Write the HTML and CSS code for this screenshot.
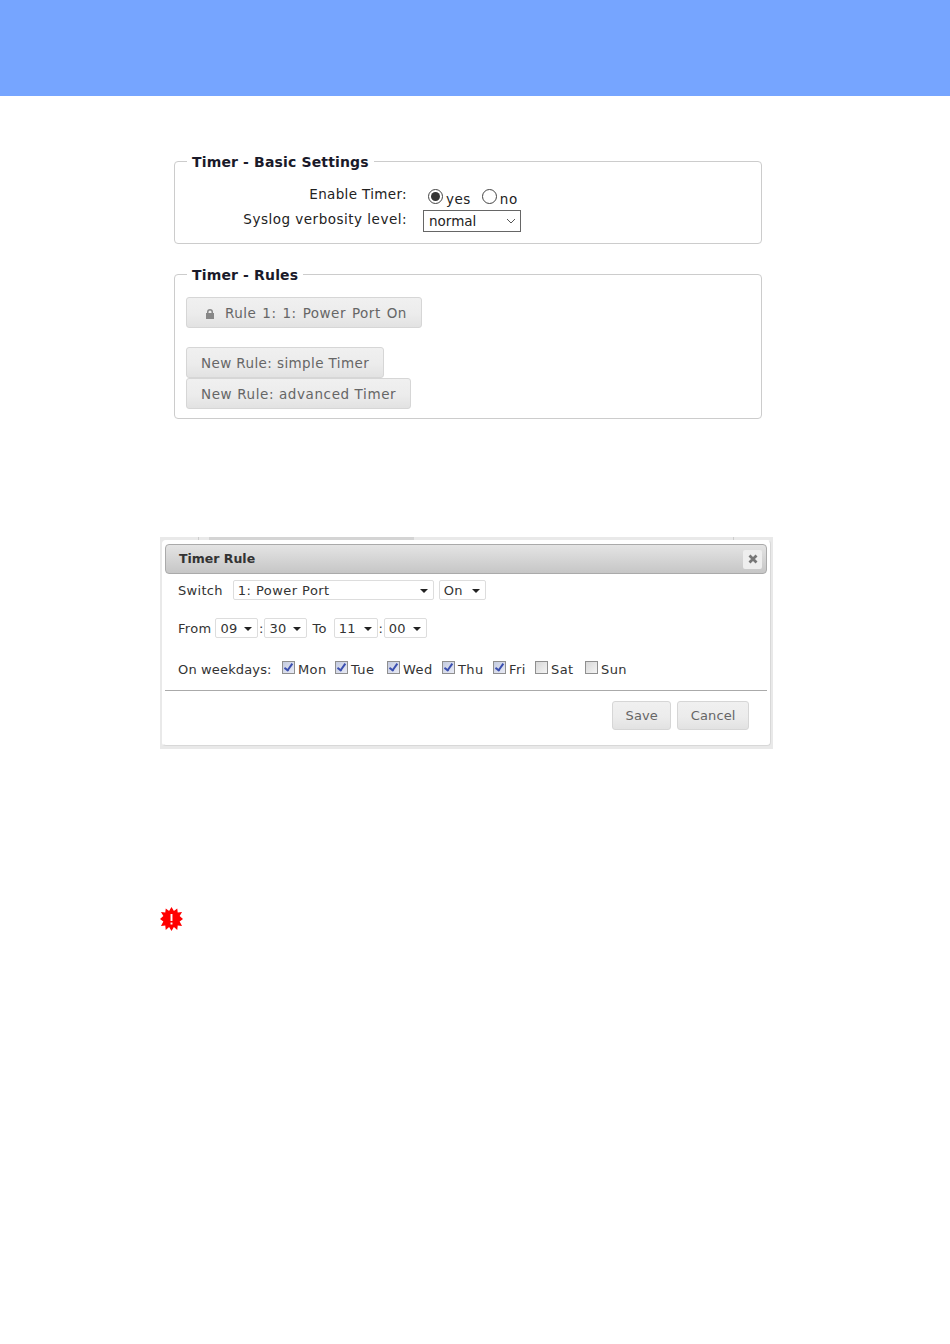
FILE: index.html
```html
<!DOCTYPE html>
<html lang="en">
<head>
    <meta charset="UTF-8">
    <title>Timer</title>
    <link rel="stylesheet" href="styles.css">
</head>
<body>
    <div class="top-band"></div>

    <main class="page">
        <!-- basic settings -->
        <fieldset class="group group-basic">
            <legend>Timer - Basic Settings</legend>
            <div class="form-grid">
                <label class="form-label form-label-short">Enable Timer:</label>
                <div class="radios">
                    <input type="radio" name="enable" class="radio" checked><span class="radio-text">yes</span>
                    <input type="radio" name="enable" class="radio radio-no"><span class="radio-text">no</span>
                </div>
                <label class="form-label form-label-low">Syslog verbosity level:</label>
                <div class="native-select"><span class="native-value">normal</span>
                    <svg class="chevron" width="10" height="6" viewBox="0 0 10 6"><path d="M1 1l4 4 4-4" fill="none" stroke="#555" stroke-width="1"/></svg>
                </div>
            </div>
        </fieldset>

        <!-- rules -->
        <fieldset class="group group-rules">
            <legend>Timer - Rules</legend>
            <button class="btn btn-rule">
                <svg class="lock" width="8" height="10" viewBox="0 0 8 10"><path d="M1 4V3a3 3 0 0 1 6 0v1h1v6H0V4zm1.500 0h3V3a1.500 1.500 0 0 0-3 0z" fill="#888"/></svg>
                Rule 1: 1: Power Port On
            </button>
            <div class="new-rules">
                <button class="btn btn-simple">New Rule: simple Timer</button>
                <button class="btn btn-advanced">New Rule: advanced Timer</button>
            </div>
        </fieldset>

        <!-- dialog shot -->
        <div class="dialog-frame">
            <div class="behind-strip">
                <span class="behind-a"></span><span class="behind-b"></span><span class="behind-c"></span>
            </div>
            <div class="dialog">
                <div class="dialog-title">
                    <span class="title-text">Timer Rule</span>
                    <span class="close-btn">
                        <svg width="10" height="10" viewBox="0 0 10 10"><path d="M1.500 1.500l7 7M8.500 1.500l-7 7" stroke="#777" stroke-width="2.800" fill="none"/></svg>
                    </span>
                </div>
                <div class="dialog-body">
                    <div class="row row-switch">
                        <span class="row-label">Switch</span>
                        <span class="dd dd-port">1: Power Port</span>
                        <span class="dd dd-state">On</span>
                    </div>
                    <div class="row row-time">
                        <span class="row-label">From</span>
                        <span class="dd dd-time">09</span><span class="sep">:</span><span class="dd dd-time">30</span>
                        <span class="row-label to-label">To</span>
                        <span class="dd dd-time dd-wide">11</span><span class="sep">:</span><span class="dd dd-time">00</span>
                    </div>
                    <div class="row-days">
                        <span class="row-label days-label">On weekdays:</span>
                        <label class="day"><input type="checkbox" class="check" checked>Mon</label>
                        <label class="day"><input type="checkbox" class="check" checked>Tue</label>
                        <label class="day"><input type="checkbox" class="check" checked>Wed</label>
                        <label class="day"><input type="checkbox" class="check" checked>Thu</label>
                        <label class="day"><input type="checkbox" class="check" checked>Fri</label>
                        <label class="day"><input type="checkbox" class="check">Sat</label>
                        <label class="day"><input type="checkbox" class="check">Sun</label>
                    </div>
                </div>
                <div class="dialog-buttons">
                    <button class="btn btn-dialog">Save</button>
                    <button class="btn btn-dialog">Cancel</button>
                </div>
            </div>
        </div>

        <svg class="alert" width="23" height="24" viewBox="0 0 24 24" preserveAspectRatio="none">
            <polygon fill="#f00" points="12,0 14.500,4 18,1.500 18.500,5.500 23,5 20.500,9 24,12 20.500,14.500 23,19 18.500,18.500 18,23 14.500,20 12,24 9.500,20 6,23 5.500,18.500 1,19 3.500,14.500 0,12 3.500,9 1,5 5.500,5.500 6,1.500 9.500,4"/>
            <rect x="11" y="7" width="2" height="7" fill="#fff"/>
            <rect x="11" y="15.500" width="2" height="2" fill="#fff"/>
        </svg>
    </main>
</body>
</html>
```

FILE: styles.css
```css
body {
    margin: 0;
    background: #fff;
    font-family: "DejaVu Sans", Verdana, sans-serif;
    font-size: 13.5px;
    color: #222;
}

.top-band {
    height: 96px;
    background: #76a5ff;
}

.page {
    padding: 56px 0 0 160px;
}

/* fieldsets */
.group {
    box-sizing: border-box;
    width: 588px;
    margin: 0 0 0 14px;
    padding: 0;
    border: 1px solid #ccc;
    border-radius: 4px;
}

.group legend {
    margin-left: 12px;
    padding: 2px 5px 0;
    font-size: 14px;
    font-weight: bold;
    letter-spacing: 0.15px;
    line-height: 16px;
    color: #1a1a2a;
}

.group-basic {
    height: 92px;
}

.group-rules {
    height: 154px;
    margin-top: 21px;
    padding: 14px 11px 0;
}

.group-rules legend {
    margin-left: 1px;
}

.form-grid {
    display: grid;
    grid-template-columns: 232px auto;
    column-gap: 16px;
    row-gap: 4px;
    margin-top: 13px;
    letter-spacing: 0.5px;
}

.form-label {
    text-align: right;
    line-height: 22px;
}

.form-label-short {
    letter-spacing: 0.35px;
}

.form-label-low {
    line-height: 18px;
}

.radios {
    display: flex;
    align-items: center;
    height: 23px;
    padding: 4px 0 0 5px;
    box-sizing: border-box;
}

.radio {
    appearance: none;
    width: 15px;
    height: 15px;
    margin: 0;
    border: 1px solid #444;
    border-radius: 50%;
    background: #fff;
}

.radio:checked::after {
    content: "";
    display: block;
    width: 9px;
    height: 9px;
    margin: 2px;
    border-radius: 50%;
    background: #333;
}

.radio-text {
    margin-left: 3px;
    position: relative;
    top: 2px;
}

.radio-no {
    margin-left: 11px;
}

.native-select {
    box-sizing: border-box;
    width: 98px;
    height: 22px;
    padding-left: 5px;
    border: 1px solid #666;
    line-height: 21px;
    letter-spacing: 0;
    display: flex;
    align-items: center;
    justify-content: space-between;
}

.native-value {
    padding-top: 1px;
}

.chevron {
    margin-right: 4px;
}

/* buttons */
.btn {
    box-sizing: border-box;
    display: block;
    padding: 0 14px;
    height: 31px;
    border: 1px solid #d6d6d6;
    border-radius: 3px;
    background: linear-gradient(#f0f0f0 0%, #ececec 55%, #e2e2e2 100%);
    font-family: inherit;
    font-size: 13.5px;
    letter-spacing: 0.5px;
    color: #666;
}

.btn-rule {
    padding-left: 19px;
    word-spacing: 1.200px;
}

.btn-simple {
    letter-spacing: 0.4px;
}

.btn-advanced {
    letter-spacing: 0.6px;
}

.lock {
    margin-right: 5px;
    vertical-align: -1px;
}

.new-rules {
    margin-top: 19px;
    display: flex;
    flex-direction: column;
    align-items: flex-start;
}

/* dialog screenshot */
.dialog-frame {
    box-sizing: border-box;
    width: 613px;
    height: 212px;
    margin-top: 118px;
    padding: 0 2px 3px;
    background: #e9e9e9;
}

.behind-strip {
    display: flex;
    height: 3px;
}

.behind-a {
    width: 36px;
    border-right: 1px solid #ccc;
}

.behind-b {
    width: 205px;
    margin-left: 10px;
    background: #d4d4d4;
}

.behind-c {
    width: 319px;
    border-right: 1px solid #ccc;
}

.dialog {
    box-sizing: border-box;
    height: 206px;
    padding: 3px 3px 0 2px;
    background: #fff;
    border-radius: 4px;
    border: 1px solid #fff;
    border-bottom-color: #d8d8d8;
    border-right-color: #d8d8d8;
}

.dialog-title {
    box-sizing: border-box;
    display: flex;
    align-items: center;
    justify-content: space-between;
    height: 30px;
    padding: 0 4px 0 13px;
    border: 1px solid #aaa;
    border-radius: 4px;
    background: linear-gradient(#e4e4e4, #c6c6c6);
    font-size: 12.5px;
    font-weight: bold;
    color: #333;
}

.title-text {
    padding-bottom: 2px;
}

.close-btn {
    display: flex;
    align-items: center;
    justify-content: center;
    width: 19px;
    height: 19px;
    border-radius: 2px;
    background: #eee;
}

.dialog-body {
    padding: 0 0 0 13px;
    font-size: 13px;
    letter-spacing: 0.3px;
    color: #333;
    height: 110px;
    border-bottom: 1px solid #aaa;
}

.row {
    display: flex;
    align-items: center;
}

.row-switch {
    margin-top: 6px;
    height: 20px;
}

.row-time {
    margin-top: 18px;
    height: 20px;
}

.row-days {
    display: grid;
    grid-template-columns: 104px 53px 52px 55px 51px 42px 50px auto;
    align-items: center;
    margin-top: 21px;
    height: 20px;
}

.days-label {
    letter-spacing: 0.15px;
}

.dd {
    box-sizing: border-box;
    position: relative;
    display: block;
    height: 20px;
    padding-left: 4px;
    border: 1px solid #ddd;
    border-radius: 2px;
    line-height: 19px;
    background: #fff;
}

.dd::after {
    content: "";
    position: absolute;
    right: 5px;
    top: 8px;
    border-left: 4px solid transparent;
    border-right: 4px solid transparent;
    border-top: 4px solid #222;
}

.dd-port {
    width: 201px;
    margin-left: 10px;
    letter-spacing: 0.45px;
}

.dd-state {
    width: 47px;
    margin-left: 5px;
}

.dd-time {
    width: 43px;
}

.dd-wide {
    width: 44px;
}

.row-label + .dd-time {
    margin-left: 4px;
}

.to-label + .dd-time {
    margin-left: 7px;
}

.sep {
    width: 6px;
    text-align: center;
}

.to-label {
    margin-left: 5px;
}

.day {
    display: flex;
    align-items: center;
    letter-spacing: 0.4px;
}

.check {
    appearance: none;
    box-sizing: border-box;
    width: 13px;
    height: 13px;
    margin: -3px 3px 0 0;
    border: 1px solid #8f8f8f;
    background: linear-gradient(135deg, #d8d8d8, #f4f4f4);
    position: relative;
}

.check:checked {
    background: linear-gradient(135deg, #c4cbe0, #e8eaf4);
}

.check:checked::after {
    content: "";
    position: absolute;
    left: 3px;
    top: 0;
    width: 3px;
    height: 7px;
    border: solid #3b4fb0;
    border-width: 0 2px 2px 0;
    transform: rotate(35deg);
}

.dialog-buttons {
    display: flex;
    justify-content: flex-end;
    gap: 6px;
    padding: 10px 18px 0 0;
}

.btn-dialog {
    height: 29px;
    padding: 0 12.500px;
    font-size: 13px;
    letter-spacing: 0.1px;
}

.alert {
    display: block;
    margin-top: 158px;
}
```
